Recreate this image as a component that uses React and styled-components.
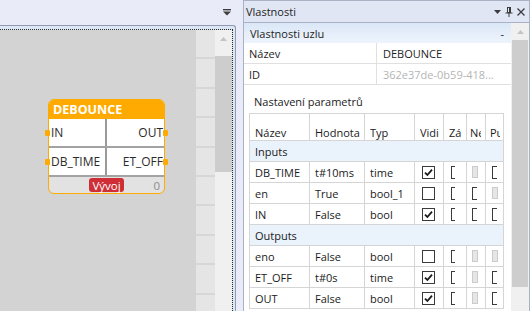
import React from "react";
import styled, { createGlobalStyle } from "styled-components";

const FONT = `"Open Sans", "Noto Sans", "Liberation Sans", sans-serif`;

const GlobalStyle = createGlobalStyle`
  html, body { margin: 0; padding: 0; }
  body { background: #e9ecf8; font-family: ${FONT}; color: #1b1b1b; }
  *, *::before, *::after { box-sizing: border-box; }
`;

const Screen = styled.div`
  display: flex;
  width: 530px;
  height: 311px;
  overflow: hidden;
  background: #e9ecf8;
`;

/* ---------- left document pane ---------- */
const DocPane = styled.div`
  flex: none;
  width: 236px;
  display: flex;
  flex-direction: column;
`;

const DocBar = styled.div`
  flex: none;
  height: 25px;
  display: flex;
  align-items: center;
  justify-content: flex-end;
  padding-right: 5px;
`;

const DocFrame = styled.div`
  flex: 1;
  min-height: 0;
  display: flex;
  padding: 3px 2px 0 0;
  background: #dde6f4;
  border-top: 1px solid #8f9ab0;
  border-right: 1px solid #8f9ab0;
  border-top-right-radius: 3px;
`;

const FocusRect = styled.div`
  flex: 1;
  min-width: 0;
  display: flex;
  border-top: 1px dotted #2a2a2a;
  border-right: 1px dotted #2a2a2a;
`;

const Canvas = styled.div`
  position: relative;
  flex: 1;
  background: #d3d3d3;
`;

const TileStrip = styled.div`
  flex: none;
  width: 19px;
  background: repeating-linear-gradient(
    to bottom,
    #e5e5e5 0,
    #e5e5e5 27.4px,
    #d6d6d6 27.4px,
    #d6d6d6 29.4px
  );
`;

const VScroll = styled.div`
  flex: none;
  width: ${(p) => p.$w}px;
  display: flex;
  flex-direction: column;
  background: #f0f0f0;
`;

const ScrollArrow = styled.div`
  flex: none;
  height: 17px;
  display: flex;
  align-items: center;
  justify-content: center;
`;

const ScrollThumb = styled.div`
  flex: none;
  height: ${(p) => p.$h}px;
  margin: ${(p) => p.$top}px ${(p) => p.$inset}px 0 ${(p) => p.$inset}px;
  background: #cdcdcd;
`;

/* ---------- function block node ---------- */
const Node = styled.div`
  position: absolute;
  left: 48px;
  top: 69px;
  width: 117px;
  border: 1px solid #ffaa00;
  border-radius: 6px;
  background: #e2e2e2;
  font-size: 12px;
`;

const NodeTitle = styled.div`
  height: 19px;
  padding-left: 4px;
  display: flex;
  align-items: center;
  background: #ffaa00;
  color: #ffffff;
  font-weight: 700;
  font-size: 12.5px;
  border-radius: 5px 5px 0 0;
`;

const PortRow = styled.div`
  position: relative;
  display: grid;
  grid-template-columns: 1fr 1fr;
  height: 29px;
  background: #ffffff;
  border-bottom: 2px solid #a3a3a3;
`;

const PortCell = styled.div`
  display: flex;
  align-items: center;
  justify-content: ${(p) => (p.$out ? "flex-end" : "flex-start")};
  padding: ${(p) => (p.$out ? "0 1px 0 0" : "0 0 0 2px")};
  border-right: ${(p) => (p.$out ? "none" : "2px solid #9a9a9a")};
  color: #2b2b2b;
  white-space: nowrap;
`;

const Pin = styled.span`
  position: absolute;
  top: 50%;
  ${(p) => (p.$out ? "right: -4px;" : "left: -4px;")}
  width: 5px;
  height: 6px;
  margin-top: -3px;
  border-radius: 1px;
  background: #ffaa00;
`;

const NodeFooter = styled.div`
  display: grid;
  grid-template-columns: 1fr auto 1fr;
  align-items: center;
  height: 16px;
  border-radius: 0 0 5px 5px;
`;

const Badge = styled.span`
  grid-column: 2;
  width: 35px;
  height: 14px;
  display: flex;
  align-items: center;
  justify-content: center;
  border-radius: 3px;
  background: #cf2e36;
  color: #ffffff;
  font-size: 11.5px;
`;

const Counter = styled.span`
  grid-column: 3;
  justify-self: end;
  padding-right: 4px;
  color: #8c8c8c;
  font-size: 11.5px;
`;

/* ---------- properties tool window ---------- */
const ToolPane = styled.div`
  flex: none;
  width: 287px;
  margin-left: 7px;
  display: flex;
  flex-direction: column;
  border: 1px solid #a9b2c5;
  border-bottom: none;
  background: #ffffff;
  font-size: 11px;
`;

const ToolTitle = styled.div`
  flex: none;
  height: 22px;
  display: flex;
  align-items: center;
  padding: 0 2px 0 2px;
  background: #e1e6f4;
  border-bottom: 1px solid #a9b2c5;
  color: #1e1e1e;
`;

const TitleText = styled.span`
  flex: 1;
`;

const TitleIcon = styled.span`
  width: 12px;
  height: 12px;
  display: flex;
  align-items: center;
  justify-content: center;
`;

const ToolBody = styled.div`
  flex: 1;
  min-height: 0;
  display: flex;
`;

const ToolContent = styled.div`
  flex: 1;
  min-width: 0;
`;

const SectionHeader = styled.div`
  height: 20px;
  display: flex;
  align-items: center;
  justify-content: space-between;
  padding: 0 7px 0 6px;
  background: linear-gradient(to bottom, #dbe7f7, #eef4fc);
  color: #1e1e1e;
`;

const PropRow = styled.div`
  display: grid;
  grid-template-columns: 133px 1fr;
  height: 21px;
  border-bottom: 1px solid #e0e0e0;
`;

const PropCell = styled.div`
  display: flex;
  align-items: center;
  padding-left: ${(p) => (p.$value ? 6 : 5)}px;
  border-right: ${(p) => (p.$value ? "none" : "1px solid #e0e0e0")};
  color: ${(p) => (p.$muted ? "#b5b5b5" : "#1e1e1e")};
  white-space: nowrap;
  overflow: hidden;
`;

const ParamsTitle = styled.div`
  padding: 9px 0 4px 10px;
  line-height: 15px;
`;

const COLS = "60px 55px 50px 29px 23px 19px 17px";
const LINE = "#d5d5d5";

const ParamTable = styled.div`
  margin-left: 5px;
  width: 255px;
  border: 1px solid ${LINE};
  border-bottom: none;
`;

const HeadRow = styled.div`
  display: grid;
  grid-template-columns: ${COLS};
  height: 27px;
  border-bottom: 1px solid ${LINE};
`;

const HeadCell = styled.div`
  display: flex;
  align-items: flex-end;
  min-width: 0;
  padding: 0 ${(p) => p.$pr}px 0 ${(p) => p.$pl}px;
  border-right: 1px solid ${LINE};
  &:last-child { border-right: none; }
`;

const ClipText = styled.span`
  display: block;
  width: 100%;
  overflow: hidden;
  white-space: nowrap;
  line-height: 15px;
`;

const DataRow = styled.div`
  display: grid;
  grid-template-columns: ${COLS};
  height: 21px;
  border-bottom: 1px solid ${LINE};
`;

const DataCell = styled.div`
  display: flex;
  align-items: center;
  min-width: 0;
  padding-left: 5px;
  border-right: 1px solid ${LINE};
  white-space: nowrap;
  overflow: hidden;
`;

const CheckCell = styled.div`
  display: flex;
  align-items: center;
  min-width: 0;
  padding-left: ${(p) => p.$offset}px;
  border-right: 1px solid ${LINE};
  overflow: hidden;
  &:last-child { border-right: none; }
`;

const CheckClip = styled.span`
  display: block;
  flex: none;
  width: ${(p) => p.$w}px;
  height: 13px;
  overflow: hidden;
`;

const CheckBox = styled.span`
  display: flex;
  align-items: center;
  justify-content: center;
  width: 13px;
  height: 13px;
  border: 1px solid #3a3a3a;
  background: #ffffff;
`;

const GrayBox = styled.span`
  display: block;
  flex: none;
  width: 6px;
  height: 12px;
  border: 1px solid #cbcbcb;
  background: #e6e6e6;
`;

const GroupRow = styled.div`
  height: 21px;
  display: flex;
  align-items: center;
  padding-left: 5px;
  background: #eaf2fb;
  border-bottom: 1px solid ${LINE};
`;

/* ---------- icons ---------- */
const UpArrow = () => (
  <svg width="7" height="4" viewBox="0 0 7 4">
    <polygon points="0,4 7,4 3.5,0" fill="#c4c4c4" />
  </svg>
);

const DropMenuIcon = () => (
  <svg width="8" height="7" viewBox="0 0 8 7">
    <rect x="0" y="0" width="8" height="1.4" fill="#3d3d3d" />
    <polygon points="0,2.6 8,2.6 4,6.6" fill="#3d3d3d" />
  </svg>
);

const TriangleDown = () => (
  <svg width="7" height="4" viewBox="0 0 7 4">
    <polygon points="0,0 7,0 3.5,4" fill="#3d3d3d" />
  </svg>
);

const PinIcon = () => (
  <svg width="8" height="10" viewBox="0 0 8 10">
    <rect x="2.5" y="0.5" width="3" height="5" fill="none" stroke="#3d3d3d" strokeWidth="1" />
    <rect x="4" y="1" width="1.5" height="4.5" fill="#3d3d3d" />
    <line x1="0.5" y1="6" x2="7.5" y2="6" stroke="#3d3d3d" strokeWidth="1" />
    <line x1="4" y1="6" x2="4" y2="10" stroke="#3d3d3d" strokeWidth="1" />
  </svg>
);

const CloseIcon = () => (
  <svg width="8" height="8" viewBox="0 0 8 8">
    <path d="M0.5 0.5 L7.5 7.5 M7.5 0.5 L0.5 7.5" stroke="#3d3d3d" strokeWidth="1.3" fill="none" />
  </svg>
);

const CheckMark = () => (
  <svg width="11" height="11" viewBox="0 0 11 11">
    <path d="M2 5.6 L4.4 8 L9 2.6" stroke="#1b1b1b" strokeWidth="1.8" fill="none" />
  </svg>
);

/* ---------- data ---------- */
const headCols = [
  { label: "Název", pl: 5, pr: 2 },
  { label: "Hodnota", pl: 5, pr: 2 },
  { label: "Typ", pl: 5, pr: 2 },
  { label: "Vidi", pl: 5, pr: 2 },
  { label: "Zá", pl: 5, pr: 3 },
  { label: "Ne", pl: 3, pr: 4 },
  { label: "Pu", pl: 4, pr: 3 },
];

const checkCols = [
  { offset: 7, clip: 13 },
  { offset: 7, clip: 4 },
  { offset: 5, clip: 5 },
  { offset: 6, clip: 5 },
];

const groups = [
  {
    name: "Inputs",
    rows: [
      { n: "DB_TIME", v: "t#10ms", t: "time", c: ["on", "off", "gray", "off"] },
      { n: "en", v: "True", t: "bool_1", c: ["off", "off", "off", "gray"] },
      { n: "IN", v: "False", t: "bool", c: ["on", "off", "off", "off"] },
    ],
  },
  {
    name: "Outputs",
    rows: [
      { n: "eno", v: "False", t: "bool", c: ["off", "off", "gray", "gray"] },
      { n: "ET_OFF", v: "t#0s", t: "time", c: ["on", "off", "gray", "off"] },
      { n: "OUT", v: "False", t: "bool", c: ["on", "off", "gray", "off"] },
    ],
  },
];

const Check = ({ state, col }) => (
  <CheckCell $offset={col.offset}>
    {state === "gray" ? (
      <GrayBox />
    ) : (
      <CheckClip $w={col.clip}>
        <CheckBox>{state === "on" ? <CheckMark /> : null}</CheckBox>
      </CheckClip>
    )}
  </CheckCell>
);

export default function App() {
  return (
    <>
      <GlobalStyle />
      <Screen>
        <DocPane>
          <DocBar>
            <DropMenuIcon />
          </DocBar>
          <DocFrame>
            <FocusRect>
              <Canvas>
                <Node>
                  <NodeTitle>DEBOUNCE</NodeTitle>
                  <PortRow>
                    <Pin />
                    <PortCell>IN</PortCell>
                    <PortCell $out>OUT</PortCell>
                    <Pin $out />
                  </PortRow>
                  <PortRow>
                    <Pin />
                    <PortCell>DB_TIME</PortCell>
                    <PortCell $out>ET_OFF</PortCell>
                    <Pin $out />
                  </PortRow>
                  <NodeFooter>
                    <Badge>Vývoj</Badge>
                    <Counter>0</Counter>
                  </NodeFooter>
                </Node>
              </Canvas>
              <TileStrip />
              <VScroll $w={17}>
                <ScrollArrow>
                  <UpArrow />
                </ScrollArrow>
                <ScrollThumb $h={116} $top={9} $inset={0} />
              </VScroll>
            </FocusRect>
          </DocFrame>
        </DocPane>

        <ToolPane>
          <ToolTitle>
            <TitleText>Vlastnosti</TitleText>
            <TitleIcon>
              <TriangleDown />
            </TitleIcon>
            <TitleIcon>
              <PinIcon />
            </TitleIcon>
            <TitleIcon>
              <CloseIcon />
            </TitleIcon>
          </ToolTitle>
          <ToolBody>
            <ToolContent>
              <SectionHeader>
                <span>Vlastnosti uzlu</span>
                <span>-</span>
              </SectionHeader>
              <PropRow>
                <PropCell>Název</PropCell>
                <PropCell $value>DEBOUNCE</PropCell>
              </PropRow>
              <PropRow>
                <PropCell>ID</PropCell>
                <PropCell $value $muted>362e37de-0b59-418...</PropCell>
              </PropRow>
              <ParamsTitle>Nastavení parametrů</ParamsTitle>
              <ParamTable>
                <HeadRow>
                  {headCols.map((h) => (
                    <HeadCell key={h.label} $pl={h.pl} $pr={h.pr}>
                      <ClipText>{h.label}</ClipText>
                    </HeadCell>
                  ))}
                </HeadRow>
                {groups.map((g) => (
                  <React.Fragment key={g.name}>
                    <GroupRow>{g.name}</GroupRow>
                    {g.rows.map((r) => (
                      <DataRow key={r.n}>
                        <DataCell>{r.n}</DataCell>
                        <DataCell>{r.v}</DataCell>
                        <DataCell>{r.t}</DataCell>
                        {r.c.map((s, i) => (
                          <Check key={i} state={s} col={checkCols[i]} />
                        ))}
                      </DataRow>
                    ))}
                  </React.Fragment>
                ))}
              </ParamTable>
            </ToolContent>
            <VScroll $w={18}>
              <ScrollArrow>
                <UpArrow />
              </ScrollArrow>
              <ScrollThumb $h={247} $top={0} $inset={1} />
            </VScroll>
          </ToolBody>
        </ToolPane>
      </Screen>
    </>
  );
}
